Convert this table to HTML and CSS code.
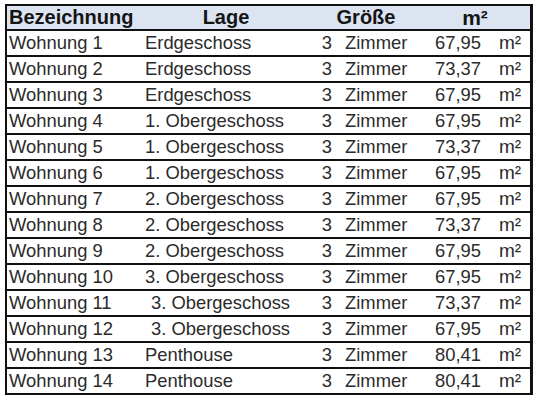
FILE: index.html
```html
<!DOCTYPE html>
<html lang="de">
<head>
<meta charset="utf-8">
<title>Wohnungen</title>
<link rel="stylesheet" href="styles.css">
</head>
<body>
<table class="flats">
  <colgroup>
    <col class="c-name"><col class="c-lage"><col class="c-cnt"><col class="c-zi"><col class="c-num"><col class="c-unit">
  </colgroup>
  <thead>
    <tr>
      <th class="h-name">Bezeichnung</th>
      <th class="h-center">Lage</th>
      <th class="h-center" colspan="2">Größe</th>
      <th class="h-center h-unit" colspan="2">m²</th>
    </tr>
  </thead>
  <tbody>
    <tr><td class="name">Wohnung 1</td><td class="lage">Erdgeschoss</td><td class="cnt">3</td><td class="zi">Zimmer</td><td class="num">67,95</td><td class="unit">m²</td></tr>
    <tr><td class="name">Wohnung 2</td><td class="lage">Erdgeschoss</td><td class="cnt">3</td><td class="zi">Zimmer</td><td class="num">73,37</td><td class="unit">m²</td></tr>
    <tr><td class="name">Wohnung 3</td><td class="lage">Erdgeschoss</td><td class="cnt">3</td><td class="zi">Zimmer</td><td class="num">67,95</td><td class="unit">m²</td></tr>
    <tr><td class="name">Wohnung 4</td><td class="lage">1. Obergeschoss</td><td class="cnt">3</td><td class="zi">Zimmer</td><td class="num">67,95</td><td class="unit">m²</td></tr>
    <tr><td class="name">Wohnung 5</td><td class="lage">1. Obergeschoss</td><td class="cnt">3</td><td class="zi">Zimmer</td><td class="num">73,37</td><td class="unit">m²</td></tr>
    <tr><td class="name">Wohnung 6</td><td class="lage">1. Obergeschoss</td><td class="cnt">3</td><td class="zi">Zimmer</td><td class="num">67,95</td><td class="unit">m²</td></tr>
    <tr><td class="name">Wohnung 7</td><td class="lage">2. Obergeschoss</td><td class="cnt">3</td><td class="zi">Zimmer</td><td class="num">67,95</td><td class="unit">m²</td></tr>
    <tr><td class="name">Wohnung 8</td><td class="lage">2. Obergeschoss</td><td class="cnt">3</td><td class="zi">Zimmer</td><td class="num">73,37</td><td class="unit">m²</td></tr>
    <tr><td class="name">Wohnung 9</td><td class="lage">2. Obergeschoss</td><td class="cnt">3</td><td class="zi">Zimmer</td><td class="num">67,95</td><td class="unit">m²</td></tr>
    <tr><td class="name">Wohnung 10</td><td class="lage">3. Obergeschoss</td><td class="cnt">3</td><td class="zi">Zimmer</td><td class="num">67,95</td><td class="unit">m²</td></tr>
    <tr><td class="name">Wohnung 11</td><td class="lage indent">3. Obergeschoss</td><td class="cnt">3</td><td class="zi">Zimmer</td><td class="num">73,37</td><td class="unit">m²</td></tr>
    <tr><td class="name">Wohnung 12</td><td class="lage indent">3. Obergeschoss</td><td class="cnt">3</td><td class="zi">Zimmer</td><td class="num">67,95</td><td class="unit">m²</td></tr>
    <tr><td class="name">Wohnung 13</td><td class="lage">Penthouse</td><td class="cnt">3</td><td class="zi">Zimmer</td><td class="num">80,41</td><td class="unit">m²</td></tr>
    <tr><td class="name">Wohnung 14</td><td class="lage">Penthouse</td><td class="cnt">3</td><td class="zi">Zimmer</td><td class="num">80,41</td><td class="unit">m²</td></tr>
  </tbody>
</table>
</body>
</html>
```

FILE: styles.css
```css
html, body {
  margin: 0;
  padding: 0;
  background: #ffffff;
}
body {
  padding: 4px 0 0 5px;
  font-family: "Liberation Sans", Arial, sans-serif;
}
.flats {
  box-sizing: border-box;
  width: 528px;
  table-layout: fixed;
  border-collapse: separate;
  border-spacing: 0;
  border: 2px solid #111111;
  border-right-width: 3px;
  color: #2b2b2b;
  font-size: 18.4px;
}
.c-name { width: 133px; }
.c-lage { width: 172px; }
.c-cnt { width: 24px; }
.c-zi { width: 84px; }
.c-num { width: 65px; }
.c-unit { width: 45px; }

.flats th {
  background: #dce4f2;
  color: #151515;
  font-weight: bold;
  font-size: 20px;
  line-height: 23px;
  height: 23px;
  padding: 0;
  border-bottom: 2px solid #111111;
  white-space: nowrap;
}
.flats .h-name {
  text-align: left;
  padding-left: 2px;
}
.flats .h-center {
  text-align: center;
}
.flats .h-unit {
  font-size: 21px;
}
.flats td {
  line-height: 24px;
  height: 24px;
  padding: 0;
  white-space: nowrap;
  border-bottom: 2px solid #111111;
}
.flats tbody tr:last-child td {
  border-bottom: none;
}
.name { padding-left: 2px !important; }
.lage { padding-left: 5px !important; }
.lage.indent { padding-left: 11px !important; }
.cnt { text-align: right; padding-right: 4px !important; }
.zi { padding-left: 9px !important; }
.num { text-align: right; padding-right: 4px !important; }
.unit { padding-left: 14px !important; font-size: 19px; }
```
